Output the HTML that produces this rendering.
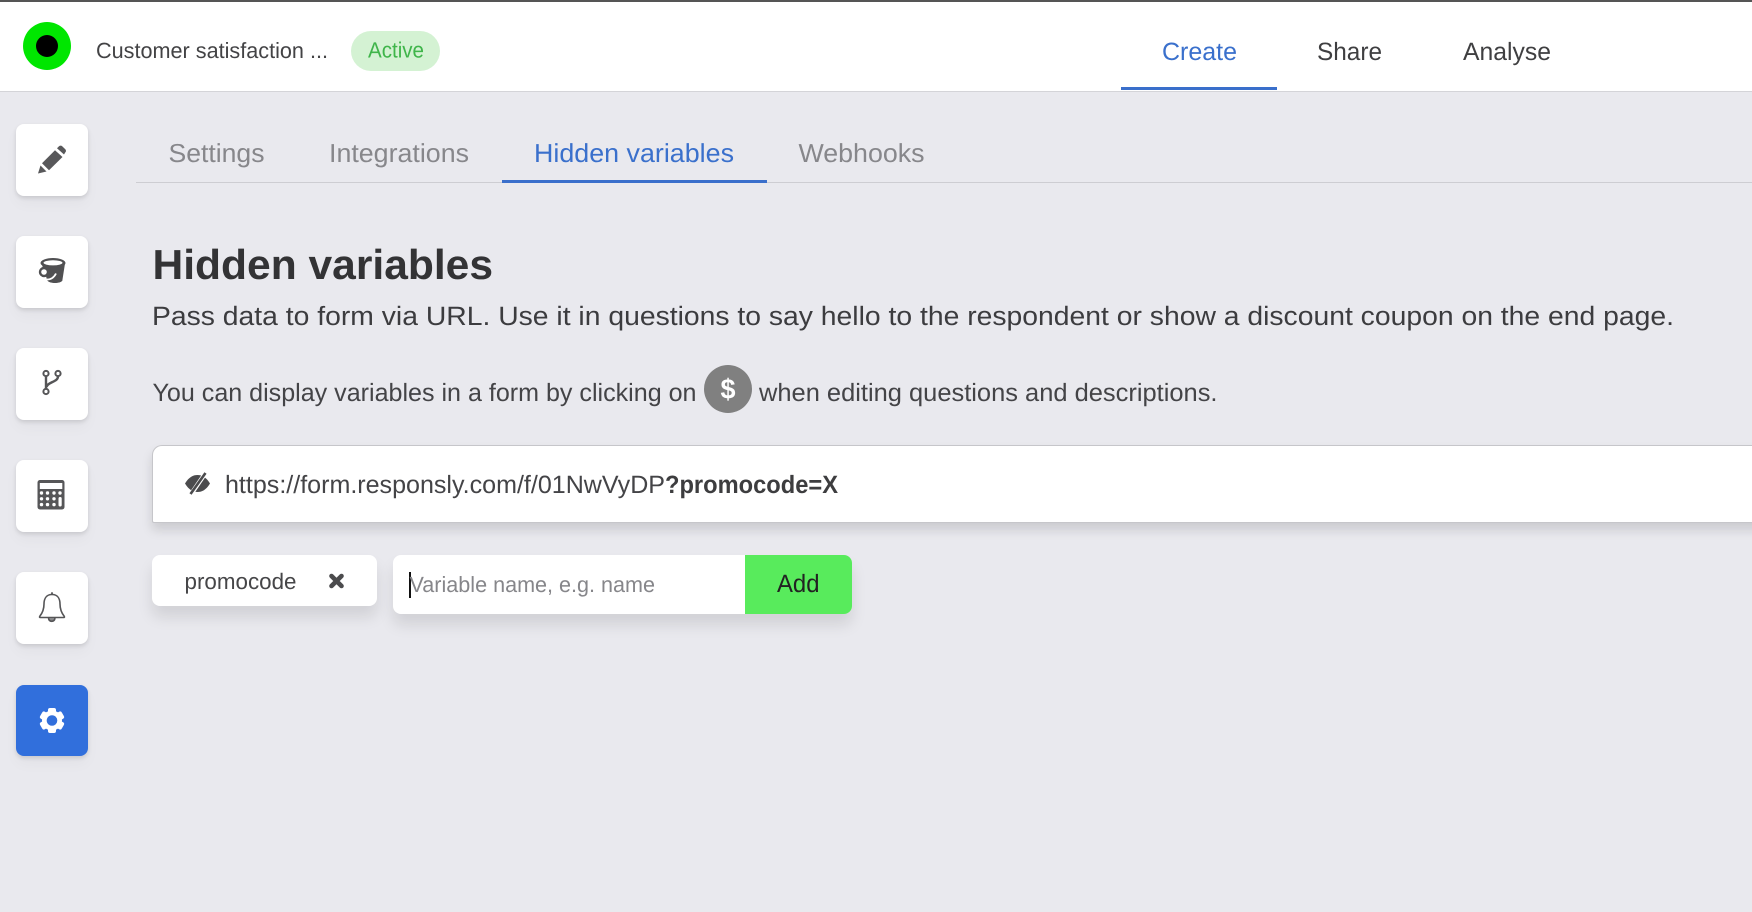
<!DOCTYPE html>
<html lang="en">
<head>
<meta charset="utf-8">
<title>Hidden variables</title>
<style>
html,body{margin:0;padding:0;width:1752px;height:912px;overflow:hidden;background:#e9e9ee;font-family:"Liberation Sans",sans-serif}
.b{position:absolute;box-sizing:border-box}
.side{left:16px;width:72px;height:72px;background:#fff;border-radius:8px;box-shadow:0 2px 4px rgba(0,0,0,.12),0 8px 14px rgba(0,0,0,.03)}
svg{position:absolute;left:0;top:0}
text{font-family:"Liberation Sans",sans-serif;text-rendering:geometricPrecision}
</style>
</head>
<body>
<div class="b" style="left:0;top:0;width:1752px;height:92px;background:#fff;border-top:2px solid #555;border-bottom:1px solid #d4d4d8"></div>
<div class="b" style="left:136px;top:181.5px;width:1616px;height:1px;background:#cdcdd2"></div>
<div class="b" style="left:351px;top:31px;width:89px;height:40px;background:#d4f2d3;border-radius:20px"></div>
<div class="b" style="left:1121px;top:87px;width:156px;height:3px;background:#3a6fcb"></div>
<div class="b" style="left:502px;top:180px;width:265px;height:3px;background:#3a6fcb"></div>

<div class="b side" style="top:124px"></div>
<div class="b side" style="top:236px"></div>
<div class="b side" style="top:348px"></div>
<div class="b side" style="top:460px"></div>
<div class="b side" style="top:572px"></div>
<div class="b side" style="top:685px;height:71px;background:#316fdc"></div>

<div class="b" style="left:152px;top:445px;width:1700px;height:77.500px;background:#fff;border:1px solid #c6c6ca;border-right:0;border-radius:10px 0 0 2px;box-shadow:0 7px 11px rgba(0,0,0,.13)"></div>
<div class="b" style="left:152px;top:555px;width:225px;height:51px;background:#fff;border-radius:8px;box-shadow:0 11px 15px rgba(0,0,0,.1)"></div>
<div class="b" style="left:393px;top:555px;width:459px;height:59px;background:#fff;border-radius:8px;box-shadow:0 11px 15px rgba(0,0,0,.1)"></div>
<div class="b" style="left:745px;top:555px;width:107px;height:59px;background:#58eb5c;border-radius:0 8px 8px 0"></div>
<div class="b" style="left:409px;top:572px;width:1.5px;height:26px;background:#111"></div>

<svg width="1752" height="912" viewBox="0 0 1752 912" xmlns="http://www.w3.org/2000/svg">
  <!-- logo -->
  <circle cx="47" cy="46" r="24" fill="#00e600"/>
  <circle cx="47" cy="46" r="11" fill="#000"/>

  <!-- header text -->
  <text x="96" y="58" font-size="22" fill="#434345" textLength="232" lengthAdjust="spacingAndGlyphs">Customer satisfaction ...</text>
  <text x="368" y="57.500" font-size="22" fill="#3fb54a" textLength="56" lengthAdjust="spacingAndGlyphs">Active</text>
  <text x="1162" y="60" font-size="25" fill="#3a70cc" textLength="75" lengthAdjust="spacingAndGlyphs">Create</text>
  <text x="1317" y="60" font-size="25" fill="#3f3f41" textLength="65" lengthAdjust="spacingAndGlyphs">Share</text>
  <text x="1463" y="60" font-size="25" fill="#3f3f41" textLength="88" lengthAdjust="spacingAndGlyphs">Analyse</text>

  <!-- tabs -->
  <text x="168.500" y="162" font-size="26" fill="#87878b" textLength="96" lengthAdjust="spacingAndGlyphs">Settings</text>
  <text x="329" y="162" font-size="26" fill="#87878b" textLength="140" lengthAdjust="spacingAndGlyphs">Integrations</text>
  <text x="534" y="162" font-size="26" fill="#3a70cc" textLength="200" lengthAdjust="spacingAndGlyphs">Hidden variables</text>
  <text x="798.500" y="162" font-size="26" fill="#87878b" textLength="126" lengthAdjust="spacingAndGlyphs">Webhooks</text>

  <!-- content -->
  <text x="152.500" y="279" font-size="42" font-weight="700" fill="#333335" textLength="340.500" lengthAdjust="spacingAndGlyphs">Hidden variables</text>
  <text x="152" y="325" font-size="26.500" fill="#3c3c3f" textLength="1522" lengthAdjust="spacingAndGlyphs">Pass data to form via URL. Use it in questions to say hello to the respondent or show a discount coupon on the end page.</text>
  <text x="152.500" y="401" font-size="25" fill="#444447" textLength="544" lengthAdjust="spacingAndGlyphs">You can display variables in a form by clicking on</text>
  <circle cx="728" cy="389" r="24" fill="#808080"/>
  <text x="728" y="398.500" font-size="28" font-weight="700" fill="#fff" text-anchor="middle" textLength="15" lengthAdjust="spacingAndGlyphs">$</text>
  <text x="759" y="401" font-size="25" fill="#444447" textLength="458.500" lengthAdjust="spacingAndGlyphs">when editing questions and descriptions.</text>

  <!-- url -->
  <text x="225" y="493" font-size="25" fill="#444447" textLength="440" lengthAdjust="spacingAndGlyphs">https://form.responsly.com/f/01NwVyDP</text>
  <text x="665" y="493" font-size="25" font-weight="700" fill="#3d3d3f" textLength="173" lengthAdjust="spacingAndGlyphs">?promocode=X</text>
  <!-- eye slash -->
  <path d="M185 483.500C189 477 193 475 197.500 475S206 477 210 483.500C206 490 202 492 197.500 492S189 490 185 483.500Z" fill="#4b4b4d"/>
  <path d="M190.500 495L205.500 473" stroke="#fff" stroke-width="4.400"/>
  <path d="M190.500 494L205.500 473" stroke="#4b4b4d" stroke-width="2.600"/>

  <!-- chip -->
  <text x="184.500" y="589" font-size="22.500" fill="#464648" textLength="112" lengthAdjust="spacingAndGlyphs">promocode</text>
  <path d="M331.500 576L341.500 586M341.500 576L331.500 586" stroke="#4b4b4d" stroke-width="4.600" stroke-linecap="round"/>

  <!-- input -->
  <text x="409.500" y="592" font-size="22" fill="#86868a" textLength="245.500" lengthAdjust="spacingAndGlyphs">Variable name, e.g. name</text>
  <text x="777" y="592" font-size="25" fill="#222" textLength="42.500" lengthAdjust="spacingAndGlyphs">Add</text>

  <!-- pencil -->
  <g fill="#58585a">
    <path d="M38 173.500L40.500 165.500L46.500 171.500Z"/>
    <path d="M42 163.300L55 150.300L62.500 157L49 170.300Z"/>
    <path d="M57 148.300L59 146.300C60 145.400 61.300 145.400 62.200 146.200L65.300 149.200C66.200 150.100 66.200 151.500 65.300 152.400L64 154.500Z"/>
  </g>

  <!-- bucket -->
  <g>
    <ellipse cx="53" cy="263" rx="12.500" ry="5" fill="#505052"/>
    <path d="M41.500 263.500H65L62.300 280.800C60 283.800 50 283.800 47.500 280.800Z" fill="#505052"/>
    <ellipse cx="53" cy="262.800" rx="9.500" ry="2.600" fill="#fff"/>
    <circle cx="44" cy="272" r="4" fill="#fff" stroke="#505052" stroke-width="2.400"/>
    <path d="M47 279.500C51 279.500 54 277.500 56 273.500" fill="none" stroke="#fff" stroke-width="1.800"/>
  </g>

  <!-- branch -->
  <g fill="none" stroke="#555557" stroke-width="2">
    <circle cx="46" cy="373.500" r="2.600"/>
    <circle cx="58" cy="373.500" r="2.600"/>
    <circle cx="46" cy="391.500" r="2.600"/>
    <path d="M46 376.500V388.500" stroke-width="2.400"/>
    <path d="M58 376.500C58 382 47.500 382 46.500 387" stroke-width="2.400"/>
  </g>

  <!-- calculator -->
  <rect x="37.500" y="480" width="27" height="29.500" rx="2.500" fill="#565658"/>
  <rect x="39.800" y="483" width="22.500" height="6" fill="#fff"/>
  <g fill="#fff">
    <circle cx="41.500" cy="493" r="1.700"/><circle cx="47.500" cy="493" r="1.700"/><circle cx="54" cy="493" r="1.700"/><circle cx="60" cy="493" r="1.700"/>
    <circle cx="41.500" cy="498.800" r="1.700"/><circle cx="47.500" cy="498.800" r="1.700"/><circle cx="54" cy="498.800" r="1.700"/>
    <circle cx="41.500" cy="504.600" r="1.700"/><circle cx="47.500" cy="504.600" r="1.700"/><circle cx="54" cy="504.600" r="1.700"/>
    <rect x="58.500" y="497" width="3.200" height="9.500" rx="1.500"/>
  </g>

  <!-- bell -->
  <g fill="none" stroke="#555557" stroke-width="1.600">
    <path d="M52 594.500C46.500 594.500 44 598.500 44 604C44 610 42 613.500 39.800 616.300C39.300 617 39.500 617.500 40.300 617.500H63.700C64.500 617.500 64.700 617 64.200 616.300C62 613.500 60 610 60 604C60 598.500 57.500 594.500 52 594.500Z"/>
    <path d="M48.500 618C48.800 620.500 50 621.300 51.700 621.300C53.400 621.300 54.700 620.500 55 618" fill="#8a8a8c"/>
    <path d="M52 592.300V594.500" stroke-width="1.800"/>
  </g>

  <!-- gear -->
  <g>
    <circle cx="52" cy="720.500" r="10" fill="#fff"/>
    <g fill="#fff">
      <rect x="48" y="708" width="8" height="25" rx="2"/>
      <rect x="48" y="708" width="8" height="25" rx="2" transform="rotate(60 52 720.500)"/>
      <rect x="48" y="708" width="8" height="25" rx="2" transform="rotate(120 52 720.500)"/>
    </g>
    <circle cx="52" cy="720.500" r="5.300" fill="#316fdc"/>
  </g>
</svg>
</body>
</html>
